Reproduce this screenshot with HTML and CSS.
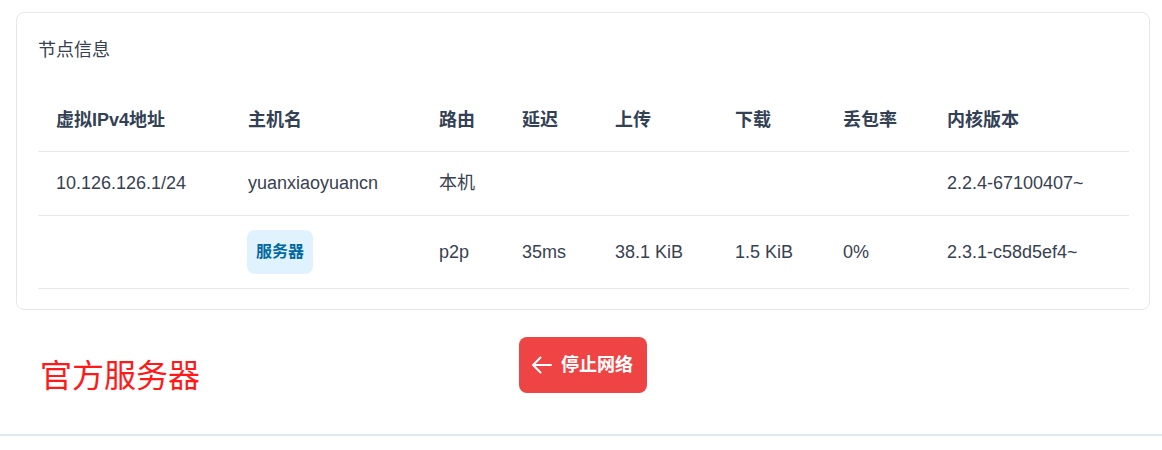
FILE: index.html
```html
<!DOCTYPE html>
<html lang="zh-CN">
<head>
<meta charset="utf-8">
<title>节点信息</title>
<link rel="stylesheet" href="styles.css">
</head>
<body>
<div class="page">
  <section class="card">
    <div class="card-title">节点信息</div>
    <table class="peers">
      <colgroup>
        <col class="c1"><col class="c2"><col class="c3"><col class="c4">
        <col class="c5"><col class="c6"><col class="c7"><col class="c8">
      </colgroup>
      <thead>
        <tr>
          <th>虚拟IPv4地址</th>
          <th>主机名</th>
          <th>路由</th>
          <th>延迟</th>
          <th>上传</th>
          <th>下载</th>
          <th>丢包率</th>
          <th>内核版本</th>
        </tr>
      </thead>
      <tbody>
        <tr class="row-local">
          <td>10.126.126.1/24</td>
          <td>yuanxiaoyuancn</td>
          <td>本机</td>
          <td></td>
          <td></td>
          <td></td>
          <td></td>
          <td>2.2.4-67100407~</td>
        </tr>
        <tr class="row-peer">
          <td></td>
          <td><span class="badge">服务器</span></td>
          <td>p2p</td>
          <td>35ms</td>
          <td>38.1 KiB</td>
          <td>1.5 KiB</td>
          <td>0%</td>
          <td>2.3.1-c58d5ef4~</td>
        </tr>
      </tbody>
    </table>
  </section>
  <div class="actions">
    <div class="server-name">官方服务器</div>
    <button class="stop-btn" type="button">
      <svg class="arrow" viewBox="0 0 24 24" width="24" height="24" fill="none" stroke="currentColor" stroke-width="2" stroke-linecap="round" stroke-linejoin="round"><path d="M10.5 19.5 3 12m0 0 7.5-7.5M3 12h18"/></svg>
      <span>停止网络</span>
    </button>
    <div></div>
  </div>
</div>
<div class="divider"></div>
</body>
</html>
```
FILE: styles.css
```css
html, body {
  margin: 0;
  padding: 0;
  background: #ffffff;
}
body {
  font-family: "Liberation Sans", "Noto Sans CJK SC", sans-serif;
  color: #374151;
}
.page {
  padding: 12px 12px 0 16px;
}
.card {
  border: 1px solid #e5e7eb;
  border-radius: 8px;
  padding: 24px 20px 20px 21px;
}
.card-title {
  font-size: 18px;
  line-height: 27px;
  color: #374151;
}
.peers {
  margin-top: 26px;
  width: 100%;
  border-collapse: collapse;
  table-layout: fixed;
  font-size: 18px;
}
.c1 { width: 192px; }
.c2 { width: 191px; }
.c3 { width: 83px; }
.c4 { width: 93px; }
.c5 { width: 120px; }
.c6 { width: 108px; }
.c7 { width: 104px; }
.c8 { width: 200px; }
.peers th,
.peers td {
  text-align: left;
  padding: 0 0 0 18px;
  vertical-align: middle;
  border-bottom: 1px solid #e5e7eb;
  white-space: nowrap;
  line-height: 27px;
}
.peers th {
  height: 61px;
  font-weight: 700;
  color: #334155;
}
.row-local td {
  height: 63px;
}
.row-peer td {
  height: 72px;
}
.badge {
  display: inline-block;
  vertical-align: middle;
  background: #e0f2fe;
  color: #0369a1;
  font-weight: 700;
  font-size: 16px;
  line-height: 24px;
  padding: 10px 9px;
  border-radius: 8px;
  margin-left: -1px;
}
.actions {
  height: 124px;
  box-sizing: border-box;
  padding-top: 27px;
  display: grid;
  grid-template-columns: 1fr auto 1fr;
  align-items: start;
}
.server-name {
  color: #ff1a1a;
  font-size: 32px;
  line-height: 46px;
  margin-top: 16px;
  padding-left: 24px;
}
.stop-btn {
  display: flex;
  align-items: center;
  gap: 7px;
  height: 56px;
  padding: 0 14px 0 11px;
  background: #ef4444;
  color: #ffffff;
  border: none;
  border-radius: 8px;
  font-family: "Liberation Sans", "Noto Sans CJK SC", sans-serif;
  font-size: 18px;
  font-weight: 700;
  line-height: 24px;
}
.arrow {
  display: block;
  flex: none;
}
.divider {
  height: 2px;
  background: #e2e8f0;
}
```
